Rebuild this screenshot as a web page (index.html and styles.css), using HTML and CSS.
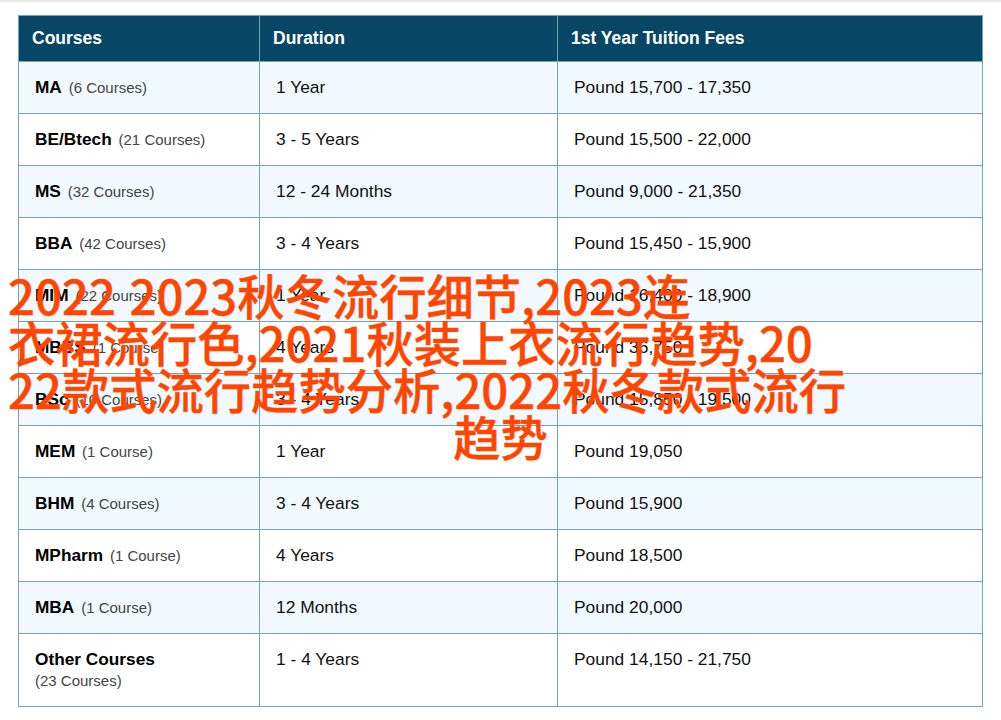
FILE: index.html
```html
<!DOCTYPE html>
<html lang="zh">
<head>
<meta charset="utf-8">
<title>Courses</title>
<link rel="stylesheet" href="styles.css">
</head>
<body>
<div class="topshade"></div>
<main class="page">
<table class="fees">
<colgroup><col class="c1"><col class="c2"><col class="c3"></colgroup>
<thead><tr><th>Courses</th><th>Duration</th><th>1st Year Tuition Fees</th></tr></thead>
<tbody>
<tr><td><b>MA</b> <small>(6 Courses)</small></td><td>1 Year</td><td>Pound 15,700 - 17,350</td></tr>
<tr><td><b>BE/Btech</b> <small>(21 Courses)</small></td><td>3 - 5 Years</td><td>Pound 15,500 - 22,000</td></tr>
<tr><td><b>MS</b> <small>(32 Courses)</small></td><td>12 - 24 Months</td><td>Pound 9,000 - 21,350</td></tr>
<tr><td><b>BBA</b> <small>(42 Courses)</small></td><td>3 - 4 Years</td><td>Pound 15,450 - 15,900</td></tr>
<tr><td><b>MIM</b> <small>(22 Courses)</small></td><td>1 Year</td><td>Pound 16,400 - 18,900</td></tr>
<tr><td><b>MBBS</b> <small>(1 Course)</small></td><td>4 Years</td><td>Pound 36,750</td></tr>
<tr><td><b>BSc</b> <small>(10 Courses)</small></td><td>3 - 4 Years</td><td>Pound 15,850 - 19,500</td></tr>
<tr><td><b>MEM</b> <small>(1 Course)</small></td><td>1 Year</td><td>Pound 19,050</td></tr>
<tr><td><b>BHM</b> <small>(4 Courses)</small></td><td>3 - 4 Years</td><td>Pound 15,900</td></tr>
<tr><td><b>MPharm</b> <small>(1 Course)</small></td><td>4 Years</td><td>Pound 18,500</td></tr>
<tr><td><b>MBA</b> <small>(1 Course)</small></td><td>12 Months</td><td>Pound 20,000</td></tr>
<tr class="tall"><td><b>Other Courses</b><br><small class="second">(23 Courses)</small></td><td>1 - 4 Years</td><td>Pound 14,150 - 21,750</td></tr>
</tbody>
</table>
</main>
<h1 class="title">
<span class="line first">2022 2023秋冬流行细节,2023连</span>
<span class="line">衣裙流行色,2021秋装上衣流行趋势,20</span>
<span class="line">22款式流行趋势分析,2022秋冬款式流行</span>
<span class="line last">趋势</span>
</h1>
</body>
</html>
```
FILE: styles.css
```css
html, body { margin: 0; padding: 0; background: #fff; }
body { width: 1001px; height: 720px; overflow: hidden; position: relative; font-family: "Liberation Sans", Arial, sans-serif; }
.topshade { height: 3px; background: linear-gradient(#e6e6e6, #f8f8f8); }
.page { padding: 12px 18px 0; }
.fees { border-collapse: collapse; table-layout: fixed; width: 965px; color: #111; font-size: 17.4px; }
.c1 { width: 241px; }
.c2 { width: 298px; }
.c3 { width: 425px; }
.fees th, .fees td { border: 1px solid #76a2b9; vertical-align: top; text-align: left; }
.fees th { height: 46px; box-sizing: border-box; background: #074665; color: #fff; font-size: 17.5px; font-weight: bold; padding: 12px 13px 0; line-height: 20px; }
.fees td { height: 52px; box-sizing: border-box; padding: 15px 16px 0; line-height: 20px; }
.fees tbody tr:nth-child(odd) td { background: #f2f9fe; }
.fees b { color: #000; font-size: 17.25px; margin-right: 2px; }
.fees small { font-size: 15px; color: #444; }
.fees .tall td { height: 73px; }
.second { display: block; margin-top: 2px; }
.title { position: absolute; left: 8px; top: 271px; width: 985px; margin: 0; font-family: "Noto Sans CJK SC", "Noto Sans", sans-serif; font-size: 47.3px; line-height: 47px; font-weight: 500; color: #ff4500; -webkit-text-stroke: 0.4px #ff4500; }
.line { display: block; white-space: nowrap; }
.first { word-spacing: 3px; }
.last { text-align: center; }
```
